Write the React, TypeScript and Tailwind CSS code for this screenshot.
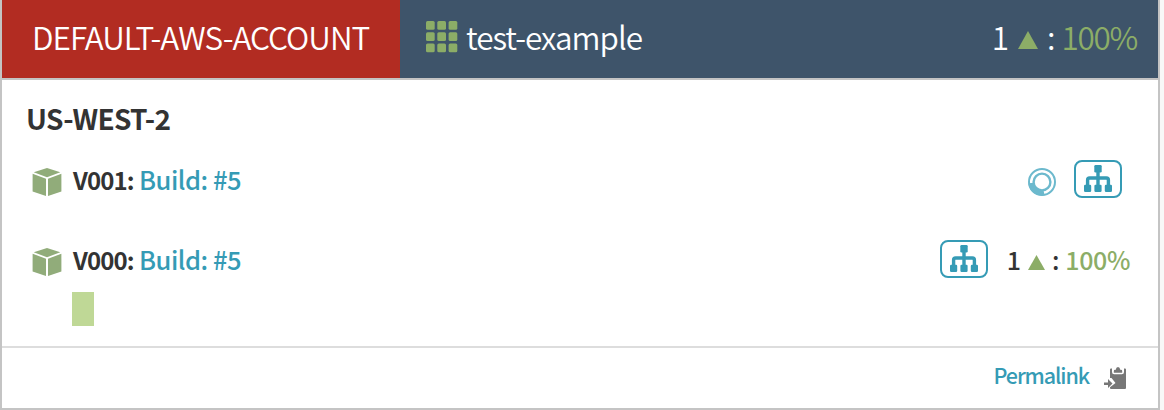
import type { ReactNode } from 'react';

function GridIcon() {
  return (
    <svg width="32" height="32" viewBox="0 0 32 32" fill="#8cad67" className="shrink-0">
      {[0, 11.3, 22.6].map((y) =>
        [0, 11.3, 22.6].map((x) => <rect key={`${x}-${y}`} x={x} y={y} width="8.7" height="8.7" rx="1.5" />),
      )}
    </svg>
  );
}

function CubeIcon() {
  return (
    <svg width="30" height="28" viewBox="0 0 30 28" fill="#91ac7a" className="shrink-0">
      <path d="M15 0 28.3 4.3 15 9.2 1.7 4.3Z" />
      <path d="M.6 5.7 14 10.7V28L.6 23.4Z" />
      <path d="M29.4 5.7 16 10.7V28l13.4-4.6Z" />
    </svg>
  );
}

function SpinnerIcon() {
  return (
    <svg width="28" height="28" viewBox="0 0 28 28" fill="none" stroke="#6cb9cd" className="shrink-0">
      <circle cx="14" cy="14" r="13" strokeWidth="2" />
      <circle cx="14" cy="14" r="8.4" strokeWidth="2.4" />
      <path d="M3.2 15A10.8 10.8 0 0 0 16 24.6" strokeWidth="5.500" />
    </svg>
  );
}

function ClusterButton() {
  return (
    <button className="flex h-[38px] w-12 shrink-0 items-center justify-center rounded-lg border-2 border-[#359bb5] bg-white">
      <svg width="28" height="27" viewBox="0 0 28 27" fill="#359bb5" className="-mt-px shrink-0">
        <rect x="10.3" y="0" width="7.4" height="7.4" rx="1.2" />
        <rect x="0" y="19.7" width="7.2" height="7.3" rx="1.2" />
        <rect x="10.4" y="19.7" width="7.2" height="7.3" rx="1.2" />
        <rect x="20.8" y="19.7" width="7.2" height="7.3" rx="1.2" />
        <path d="M14 6v14.500M3.600 20.500v-5.500q0-2 2-2h16.800q2 0 2 2v5.500" fill="none" stroke="#359bb5" strokeWidth="3.4" />
      </svg>
    </button>
  );
}

function ClipboardIcon() {
  return (
    <svg width="22" height="22" viewBox="0 0 22 22" fill="#777" className="shrink-0">
      <path d="M6 2.5Q6 1.5 7 1.5H8V5q0 2.200 2.200 2.200h7.600Q20 7.200 20 5V1.500h1q1 0 1 1V21q0 1-1 1H7q-1 0-1-1v-.7L11.500 16 7.500 11H6Z" />
      <path d="M9.800 5.800V4q0-1.300 1.300-1.300h.7Q12 0 14 0t2.200 2.700h.7Q18.200 2.700 18.200 4v1.800Z" />
      <path d="M0 15.500h4v-3.500L8.500 16.500 4 21v-3H0Z" />
    </svg>
  );
}

function Triangle({ size }: { size: 'lg' | 'sm' }) {
  return (
    <svg className={size === 'lg' ? 'h-[18px] w-5' : 'h-[15px] w-[17px]'} viewBox="0 0 20 18" preserveAspectRatio="none" fill="#8cad67">
      <path d="M10 0 20 18H0Z" />
    </svg>
  );
}

function ServerGroup({ version, children }: { version: string; children: ReactNode }) {
  return (
    <div className="flex h-[38px] items-center">
      <div className="mt-1.5 flex">
        <CubeIcon />
      </div>
      <span className="ml-[11px] mt-0.5 w-[61px] whitespace-nowrap text-[24px] font-bold leading-9 tracking-[-0.9px] text-[#333]">{version}:</span>
      <a className="ml-[5px] text-[25.5px] font-medium leading-9 tracking-[-0.45px] text-[#359bb5]">Build: #5</a>
      <div className="ml-auto flex items-center">{children}</div>
    </div>
  );
}

export default function App() {
  return (
    <div className="h-[410px] w-[1164px] overflow-hidden bg-[#f8f8f8] font-['Noto_Sans_CJK_SC',sans-serif]">
      <div className="flex h-[410px] w-[1160px] flex-col border-2 border-t-0 border-[#c4c4c4] bg-white">
        <header className="flex h-20 shrink-0 border-b-2 border-[#c4c4c4] bg-[#3e546a] text-white">
          <div className="flex w-[398px] items-center bg-[#b22c22] pb-1.5 pl-[30px] text-[31.5px] font-[350] leading-10 tracking-[-1px]">
            <span>DEFAULT-AWS-ACCOUNT</span>
          </div>
          <div className="flex flex-1 items-center pb-1.5 pl-[26px] pr-[21px] text-[31.5px] font-[350] leading-10 tracking-[-1px]">
            <div className="mt-0.5">
              <GridIcon />
            </div>
            <span className="ml-2">test-example</span>
            <div className="ml-auto flex items-center">
              <span className="tracking-normal">1</span>
              <span className="ml-[9px] mt-2"><Triangle size="lg" /></span>
              <span className="ml-[9px] tracking-normal">:</span>
              <span className="ml-1.5 tracking-[-1.3px] text-[#8cad67]">100%</span>
            </div>
          </div>
        </header>
        <main className="flex h-[266px] shrink-0 flex-col pl-6 pr-7">
          <h2 className="mt-[18px] h-[42px] text-[28px] font-bold leading-10 tracking-[-0.7px] text-[#333]">US-WEST-2</h2>
          <div className="mt-5 pl-1.5 pr-2">
            <ServerGroup version="V001">
              <span className="mr-[18px] mt-1.5"><SpinnerIcon /></span>
              <ClusterButton />
            </ServerGroup>
          </div>
          <div className="mt-[42px] pl-1.5">
            <ServerGroup version="V000">
              <ClusterButton />
              <div className="ml-[19px] flex items-center text-[25px] font-medium leading-9 text-[#333]">
                <span>1</span>
                <span className="ml-[7px] mt-[7px]"><Triangle size="sm" /></span>
                <span className="ml-[7px]">:</span>
                <span className="ml-1.5 tracking-[-0.4px] text-[#8cad67]">100%</span>
              </div>
            </ServerGroup>
            <div className="ml-10 mt-[14px] h-[34px] w-[22px] bg-[#bfd896]" />
          </div>
        </main>
        <footer className="flex flex-1 items-center justify-end border-t-2 border-[#ddd] pr-8">
          <a className="-mt-1.5 text-[21.5px] font-medium leading-8 tracking-[-1.1px] text-[#359bb5]">Permalink</a>
          <span className="ml-[15px] -mt-px"><ClipboardIcon /></span>
        </footer>
      </div>
    </div>
  );
}
